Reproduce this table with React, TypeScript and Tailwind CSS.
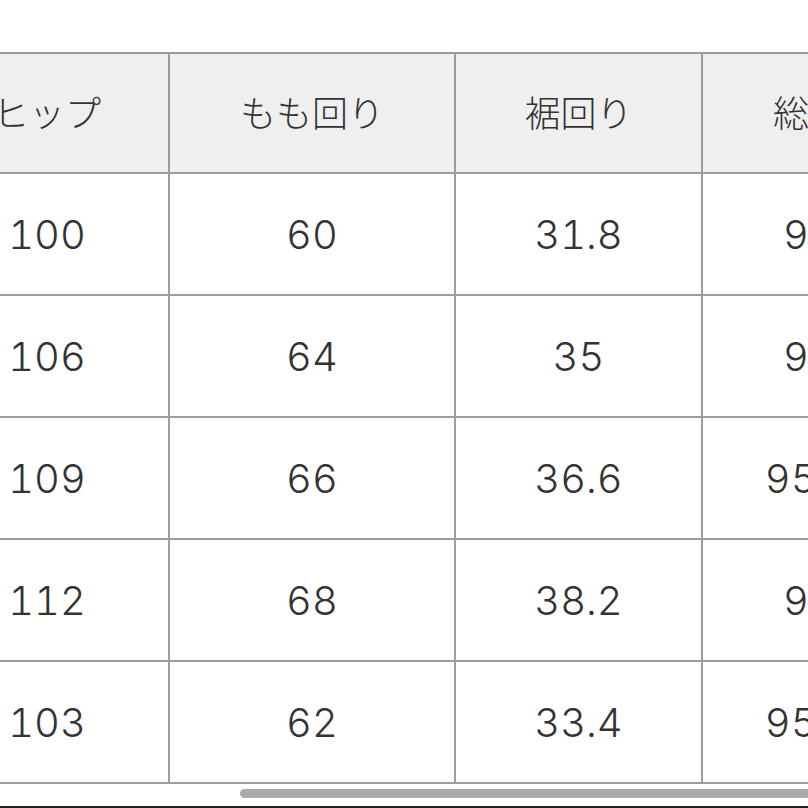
import React from "react";

const headers = ["ヒップ", "もも回り", "裾回り", "総丈"];
const rows = [
  ["100", "60", "31.8", "94"],
  ["106", "64", "35", "96"],
  ["109", "66", "36.6", "95.5"],
  ["112", "68", "38.2", "97"],
  ["103", "62", "33.4", "95.5"],
];
const widths = ["w-[250px] pl-[6px]", "w-[286px]", "w-[247px]", "w-[214px]"];

export default function App() {
  return (
    <div
      className="w-[808px] h-[808px] overflow-hidden bg-white flex flex-col text-[#333333]"
      style={{ fontFamily: '"Noto Sans CJK JP", "Noto Sans", sans-serif' }}
    >
      <div className="h-[52px] shrink-0" />
      <div className="ml-[-80px] flex flex-col border-t-2 border-[#9c9c9c] w-max">
        <div className="flex bg-[#efefef]">
          {headers.map((h, i) => (
            <div
              key={i}
              className={`${widths[i]} h-[120px] shrink-0 flex items-center justify-center border-r-2 border-b-2 border-[#9c9c9c] text-[36px] leading-none font-light pb-[4px]`}
            >
              {h}
            </div>
          ))}
        </div>
        {rows.map((r, ri) => (
          <div key={ri} className="flex bg-white">
            {r.map((c, ci) => (
              <div
                key={ci}
                className={`${widths[ci]} h-[122px] shrink-0 flex items-center justify-center border-r-2 border-b-2 border-[#9c9c9c] text-[40px] leading-none font-light font-['Inter',sans-serif] tabular-nums pt-[2px]`}
              >
                {c}
              </div>
            ))}
          </div>
        ))}
      </div>
      <div className="mt-[5px] ml-[240px] h-[9px] w-[600px] rounded-full bg-[#a9a9a9] shrink-0" />
      <div className="flex-1" />
      <div className="h-[2px] bg-[#222222] shrink-0" />
    </div>
  );
}
